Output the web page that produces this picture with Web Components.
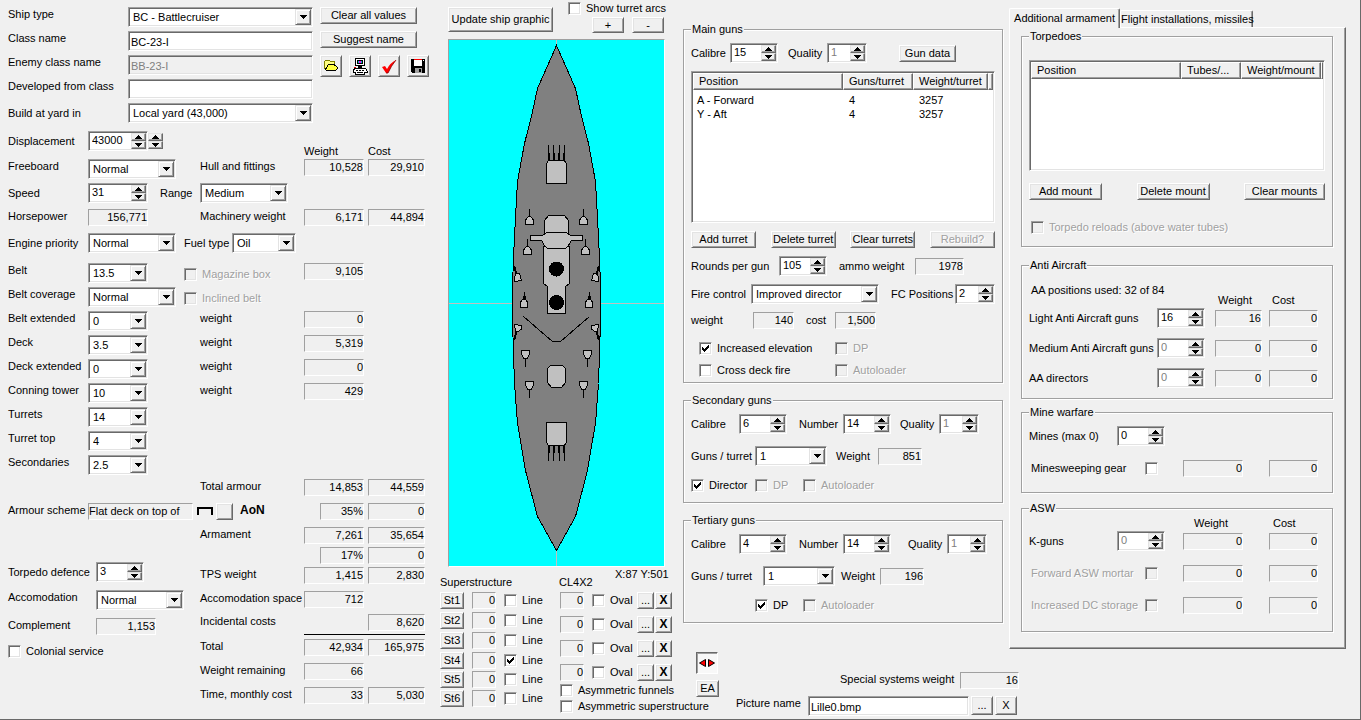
<!DOCTYPE html>
<html lang="en">
<head>
<meta charset="utf-8">
<title>Ship design</title>
<style>
  body { margin: 0; background: #f0f0f0; color: #000; font: 11px/15px "Liberation Sans", Arial, sans-serif; }
</style>
</head>
<body>
<ship-designer></ship-designer>

<script>
const BASE = `
  *, :host { box-sizing: border-box; }
  input, select, button, table { font: inherit; color: inherit; margin: 0; }
  button { border: 1px solid; border-color: #fff #696969 #696969 #fff; box-shadow: inset 1px 1px #e3e3e3, inset -1px -1px #a0a0a0;
    background: #f0f0f0; padding: 0; white-space: nowrap; }
  button:disabled { color: #a0a0a0; text-shadow: 1px 1px #fff; }
  .sunk { border: 1px solid; border-color: #a0a0a0 #fff #fff #a0a0a0; box-shadow: inset 1px 1px #696969, inset -1px -1px #e3e3e3;
    background: #fff; padding: 1px; height: 20px; width: var(--w); flex: none; }
  label { width: var(--lw); flex: none; white-space: nowrap; }
  svg { display: block; }
`;

function define(name, css, html) {
  customElements.define(name, class extends HTMLElement {
    constructor() {
      super();
      this.attachShadow({ mode: 'open' });
    }
    connectedCallback() {
      const body = typeof html === 'function' ? html(n => this.getAttribute(n) ?? '', n => this.hasAttribute(n)) : html;
      this.shadowRoot.innerHTML = `<style>${BASE}${css}</style>${body}`;
    }
  });
}

/* ---- controls ---- */
const FIELD = `:host { display: flex; align-items: var(--va, flex-start); }`;

define('text-field', FIELD + `
  input { outline: 0; }
  input.sunk { padding: 1px 3px 0 2px; }
  input:disabled { color: #808080; background: var(--bg, #fff); }
`, (a, h) => `<label for="c">${a('label')}</label>
  <input id="c" class="sunk" type="text" value="${a('value')}" ${h('disabled') ? 'disabled' : ''}>`);

define('combo-field', FIELD + `
  .sunk { display: grid; }
  select { grid-area: 1/1; appearance: none; border: 0; background: none; padding: 0 18px 0 3px; height: 17px; width: 100%; outline: 0; border-radius: 0; }
  i { grid-area: 1/1; justify-self: end; width: 16px; height: 16px; display: grid; place-items: center; pointer-events: none;
    background: #f0f0f0; border: 1px solid; border-color: #e3e3e3 #696969 #696969 #e3e3e3; box-shadow: inset 1px 1px #fff, inset -1px -1px #a0a0a0; }
`, a => `<label for="c">${a('label')}</label>
  <div class="sunk"><select id="c"><option>${a('value')}</option></select>
  <i><svg width="7" height="4" shape-rendering="crispEdges"><path d="M0 0H7V1H6V2H5V3H4V4H3V3H2V2H1V1H0Z"/></svg></i></div>`);

const SPIN_CSS = `
  .spin { display: grid; grid-template-rows: 8px 8px; width: 15px; flex: none; }
  .spin button { display: grid; place-items: center; border-color: #e3e3e3 #696969 #696969 #e3e3e3; box-shadow: inset -1px -1px #a0a0a0; }
`;
const SPIN = `<div class="spin">
  <button tabindex="-1" aria-label="Increase"><svg width="7" height="4" shape-rendering="crispEdges"><path d="M3 0H4V1H5V2H6V3H7V4H0V3H1V2H2V1H3Z"/></svg></button>
  <button tabindex="-1" aria-label="Decrease"><svg width="7" height="4" shape-rendering="crispEdges"><path d="M0 0H7V1H6V2H5V3H4V4H3V3H2V2H1V1H0Z"/></svg></button></div>`;

define('spin-field', FIELD + SPIN_CSS + `
  .sunk { display: flex; }
  input { flex: 1; min-width: 0; border: 0; padding: 0 0 0 2px; background: none; outline: 0; height: 15px; }
  input:disabled { color: #808080; }
`, (a, h) => `<label for="c">${a('label')}</label>
  <div class="sunk"><input id="c" type="text" inputmode="numeric" value="${a('value')}" ${h('disabled') ? 'disabled' : ''}>${SPIN}</div>`);

define('spin-buttons', `:host { display: block; padding-top: 2px; }` + SPIN_CSS, SPIN);

define('check-field', `
  :host { display: flex; align-items: center; }
  .box { display: grid; flex: none; }
  input { grid-area: 1/1; appearance: none; width: 13px; height: 13px; background: #fff; border: 1px solid; border-color: #a0a0a0 #fff #fff #a0a0a0;
    box-shadow: inset 1px 1px #696969, inset -1px -1px #e3e3e3; }
  svg { grid-area: 1/1; place-self: center; visibility: hidden; pointer-events: none; }
  input:checked + svg { visibility: visible; }
  label { padding-left: 5px; height: 15px; }
  :host([lead]) label { order: -1; padding-left: 2px; }
  :host([disabled]) input { background: #f0f0f0; }
  :host([disabled]) label { color: #a0a0a0; text-shadow: 1px 1px #fff; }
`, (a, h) => `<span class="box"><input id="c" type="checkbox" ${h('checked') ? 'checked' : ''} ${h('disabled') ? 'disabled' : ''}>
  <svg width="7" height="7" shape-rendering="crispEdges"><path d="M0 2H1V3H2V4H3V3H4V2H5V1H6V0H7V3H6V4H5V5H4V6H3V7H2V6H1V5H0Z"/></svg></span>
  <label for="c">${a('label')}</label>`);

define('read-out', FIELD + `
  output { display: block; width: var(--w, 60px); height: 17px; border: 1px solid; border-color: #a0a0a0 #fff #fff #a0a0a0; text-align: var(--ta, right); white-space: nowrap; flex: none; }
`, (a, h) => `${h('label') ? `<label for="c">${a('label')}</label>` : ''}<output id="c">${a('value')}</output>`);

define('push-button', `
  :host { display: block; }
  button { width: var(--w); height: var(--h, 17px); display: grid; place-items: center; }
  :host([small]) button { width: 22px; height: 22px; }
`, (a, h) => `<button ${h('disabled') ? 'disabled' : ''} ${h('name') ? `aria-label="${a('name')}"` : ''}><slot></slot></button>`);

define('group-box', `
  :host { display: block; }
  fieldset { margin: 0; min-width: 0; border: 1px solid #a0a0a0; box-shadow: inset 1px 1px #fff, 1px 1px #fff; padding: 0 7px var(--pb, 12px); }
  legend { padding: 0 1px; background: #f0f0f0; height: 15px; }
`, a => `<fieldset><legend>${a('legend')}</legend><slot></slot></fieldset>`);

define('list-view', `
  :host { display: block; }
  .sunk { width: auto; height: var(--h); overflow: hidden; }
  table { border-collapse: separate; border-spacing: 0; table-layout: fixed; width: 100%; }
  th { height: 17px; font-weight: normal; text-align: left; padding: 0 0 0 5px; background: #f0f0f0; border: 1px solid; white-space: nowrap; overflow: hidden;
    border-color: #fff #696969 #696969 #fff; box-shadow: inset -1px -1px #a0a0a0; line-height: 15px; }
  td { padding: 0 0 0 6px; line-height: 14px; height: 14px; }
  td:first-child { padding-left: 4px; }
  tr:first-child td { padding-top: 3px; }
`, a => `<div class="sunk"><table><colgroup>${a('widths').split(' ').map(w => `<col style="width:${w}px">`).join('')}<col></colgroup>
  <thead><tr>${a('heads').split('|').map(t => `<th>${t}</th>`).join('')}<th></th></tr></thead>
  <tbody>${a('rows') ? a('rows').split(';').map(r => `<tr>${r.split('|').map(t => `<td>${t}</td>`).join('')}<td></td></tr>`).join('') : ''}</tbody></table></div>`);

/* ---- identity fields and the commands beside them ---- */
define('identity-panel', `
  :host { display: flex; gap: 7px; padding: 7px 0 0 8px; }
  .fields { display: grid; gap: 4px; --lw: 120px; --w: 185px; }
  .commands { display: grid; align-content: start; gap: 7px; --w: 97px; }
  .tools { display: flex; gap: 7px; }
`, `
  <div class="fields">
    <combo-field label="Ship type" value="BC - Battlecruiser"></combo-field>
    <text-field label="Class name" value="BC-23-I"></text-field>
    <text-field label="Enemy class name" value="BB-23-I" disabled style="--bg:#f0f0f0"></text-field>
    <text-field label="Developed from class"></text-field>
    <combo-field label="Build at yard in" value="Local yard (43,000)" style="--va:center"></combo-field>
  </div>
  <div class="commands">
    <push-button>Clear all values</push-button>
    <push-button>Suggest name</push-button>
    <div class="tools">
      <push-button small name="Open"><svg width="16" height="16" shape-rendering="crispEdges">
        <path d="M1.500 3.500L2.500 2.500H6.500L7.500 3.500H11.500V6.500H5.500L2.500 11.500L1.500 10.500Z" fill="#ffff80" stroke="#808000"/>
        <path d="M5.500 6.500H11L14.500 9.500V10.500L12.500 12.500H3.500L2.500 11.500Z" fill="#ffff40" stroke="#000"/></svg></push-button>
      <push-button small name="Print"><svg width="16" height="17" shape-rendering="crispEdges">
        <path d="M3.500 .5H12.500V7.500H3.500Z" fill="#fff" stroke="#000"/><path d="M5.500 2.500H10.500V5.500H5.500Z" fill="#00c0c0" stroke="#000"/><path d="M7 3H9V5H7Z" fill="#f0f"/>
        <path d="M6 8H10V10H6Z"/><path d="M2.500 10.500H13.500L15.500 13.500V14.500H12.500V16H3.500V14.500H1.500V12.500Z" fill="#fff" stroke="#000"/><path d="M4 12.500H6M7 12.500H9M10 12.500H12M5 14.500H11" stroke="#000"/><path d="M2 9H4V10H2Z" fill="#e00000"/></svg></push-button>
      <push-button small name="Check design"><svg width="16" height="16">
        <path d="M1 9L4 8L6 11Q9 5 15 2Q10 8 7 15H5Z" fill="#f00"/><path d="M15 2Q10 8 7 15H5" fill="none" stroke="#800000" stroke-width=".8"/></svg></push-button>
      <push-button small name="Save"><svg width="16" height="16" shape-rendering="crispEdges">
        <path d="M1 1H15V15H2L1 14Z"/><path d="M4 2H12V8H4Z" fill="#fff"/><path d="M4 1H12V2H4Z" fill="#f00"/><path d="M5 10H12V15H5Z" fill="#a0a0a0"/><path d="M9 11H11V14H9Z" fill="#000"/><path d="M13 2H14V3H13Z" fill="#fff"/></svg></push-button>
    </div>
  </div>`);

/* ---- hull, machinery and armour with the weight/cost ledger ---- */
define('hull-panel', `
  :host { display: block; padding: 8px 0 0 8px; }
  .grid { display: grid; grid-template-columns: 188px 100px 60px 57px; column-gap: 4px; align-items: start; --lw: 80px; --w: 60px; }
  .top { grid-template-rows: 28px 24px 26px 24px 30px repeat(11, 24px); }
  .sums { grid-template-columns: 100px 60px 57px; grid-template-rows: 20px 20px 24px 23px 20px 5px repeat(3, 24px); }
  .row { display: flex; grid-column: 1; }
  .wide { grid-column: 1 / 3; }
  .b { grid-column: 2; white-space: nowrap; } .c { grid-column: 3; } .d { grid-column: 4; --w: 57px; }
  .head { align-self: end; }
  .total { grid-row: 15; }
  .combo { --w: 88px; }
  .pct { --w: 44px; justify-self: end; }
  check-field.in { padding-top: 3px; margin-left: 36px; }
  .bottom { display: flex; gap: 4px; }
  .left { display: grid; align-content: start; gap: 8px; width: 188px; padding-top: 35px; --lw: 88px; --w: 48px; }
  .left read-out { --w: 60px; }
  .sums .b { grid-column: 1; } .sums .c { grid-column: 2; } .sums .d { grid-column: 3; }
  hr { grid-column: 2 / 4; width: 100%; margin: 0; border: 0; height: 1px; background: #000; }
  .scheme { --w: 105px; --ta: left; }
  .aon { margin-left: 7px; font-size: 12px; font-weight: bold; }
  .shape { margin: 4px 3px 0 4px; }
`, `
  <div class="grid top">
    <div class="row"><spin-field label="Displacement" value="43000" style="--va:center"></spin-field><spin-buttons></spin-buttons></div>
    <span class="c head">Weight</span><span class="d head">Cost</span>

    <combo-field class="row combo" label="Freeboard" value="Normal"></combo-field>
    <span class="b">Hull and fittings</span><read-out class="c" value="10,528"></read-out><read-out class="d" value="29,910"></read-out>

    <div class="row wide" style="gap:12px;--va:center"><spin-field label="Speed" value="31"></spin-field><combo-field class="combo" style="--lw:40px" label="Range" value="Medium"></combo-field></div>

    <read-out class="row" label="Horsepower" value="156,771"></read-out>
    <span class="b">Machinery weight</span><read-out class="c" value="6,171"></read-out><read-out class="d" value="44,894"></read-out>

    <div class="row wide" style="gap:8px;--va:center"><combo-field class="combo" label="Engine priority" value="Normal"></combo-field><combo-field style="--lw:48px;--w:64px" label="Fuel type" value="Oil"></combo-field></div>

    <div class="row wide"><combo-field label="Belt" value="13.5"></combo-field><check-field class="in" disabled label="Magazine box"></check-field></div>
    <read-out class="c" value="9,105"></read-out>

    <div class="row wide"><combo-field class="combo" label="Belt coverage" value="Normal"></combo-field><check-field class="in" style="margin-left:8px" disabled label="Inclined belt"></check-field></div>

    <combo-field class="row" label="Belt extended" value="0"></combo-field><span class="b">weight</span><read-out class="c" value="0"></read-out>
    <combo-field class="row" label="Deck" value="3.5"></combo-field><span class="b">weight</span><read-out class="c" value="5,319"></read-out>
    <combo-field class="row" label="Deck extended" value="0"></combo-field><span class="b">weight</span><read-out class="c" value="0"></read-out>
    <combo-field class="row" label="Conning tower" value="10"></combo-field><span class="b">weight</span><read-out class="c" value="429"></read-out>
    <combo-field class="row" label="Turrets" value="14"></combo-field>
    <combo-field class="row" label="Turret top" value="4"></combo-field>
    <combo-field class="row" label="Secondaries" value="2.5"></combo-field>

    <span class="b total">Total armour</span><read-out class="c total" value="14,853"></read-out><read-out class="d total" value="44,559"></read-out>

    <div class="row wide">
      <read-out class="scheme" label="Armour scheme" value="Flat deck on top of"></read-out>
      <svg class="shape" width="16" height="8" shape-rendering="crispEdges"><path d="M0 0H16V8H14V2H2V8H0Z"/></svg>
      <push-button style="--w:17px" name="Change armour scheme"></push-button><span class="aon">AoN</span>
    </div>
    <read-out class="c pct" value="35%"></read-out><read-out class="d" value="0"></read-out>
  </div>
  <div class="bottom">
    <div class="left">
      <spin-field label="Torpedo defence" value="3" style="--va:center"></spin-field>
      <combo-field class="combo" label="Accomodation" value="Normal"></combo-field>
      <read-out label="Complement" value="1,153"></read-out>
      <check-field style="padding-top:1px;--lw:auto" label="Colonial service"></check-field>
    </div>
    <div class="grid sums">
      <span class="b">Armament</span><read-out class="c" value="7,261"></read-out><read-out class="d" value="35,654"></read-out>
      <read-out class="c pct" value="17%"></read-out><read-out class="d" value="0"></read-out>
      <span class="b">TPS weight</span><read-out class="c" value="1,415"></read-out><read-out class="d" value="2,830"></read-out>
      <span class="b">Accomodation space</span><read-out class="c" value="712"></read-out>
      <span class="b">Incidental costs</span><read-out class="d" value="8,620"></read-out>
      <hr>
      <span class="b">Total</span><read-out class="c" value="42,934"></read-out><read-out class="d" value="165,975"></read-out>
      <span class="b">Weight remaining</span><read-out class="c" value="66"></read-out>
      <span class="b">Time, monthly cost</span><read-out class="c" value="33"></read-out><read-out class="d" value="5,030"></read-out>
    </div>
  </div>`);

/* ---- plan view of the ship ---- */
define('ship-plan', `
  :host { display: block; width: 217px; height: 528px; border: 1px solid; border-color: #a0a0a0 #fff #fff #a0a0a0; background: #0ff; }
`, () => {
  const both = d => d + `<g transform="matrix(-1 0 0 1 217 0)">${d}</g>`;
  const gun = (x, y) => `<g transform="translate(${x} ${y})"><path d="M0 -8V0" stroke-width="1"/><path d="M-1 0H1L4 3.500V8H-4V3.500Z"/></g>`;
  const aft = (x, y) => `<g transform="translate(${x} ${y})"><path d="M0 8V16"/><path d="M-4 0H4V4L1.500 8H-1.500L-4 4Z"/></g>`;
  const main = `<path d="M2.500 0V15M7.500 0V15M13.500 0V15M18.500 0V15" fill="none"/><path d="M3 8H4V15H3ZM8 8H9V15H8ZM12 8H13V15H12ZM17 8H18V15H17Z" fill="#000" stroke="none"/><path d="M2.500 15.500H18.500L20.500 19V38.500H.5V19Z"/>`;
  return `<svg width="215" height="526" viewBox="1 1 215 526" role="img" aria-label="Ship plan" shape-rendering="crispEdges" fill="#c0c0c0" stroke="#000">
    <path d="M108.500 0V528M0 264.500H217" stroke="#c0c0c0"/>
    <path fill="#808080" d="M108.500 6.500L127.500 49.500L133 75L140.500 104.500L147.500 142.500L149.500 178.500L151.500 218.500L152.500 247.500V281.500L151.500 314.500L150.500 344.500L147.500 384.500L144.500 401.500L139.500 431.500L127.500 477.500L108.500 511.500
      L89.500 477.500L77.500 431.500L72.500 401.500L69.500 384.500L66.500 344.500L65.500 314.500L64.500 281.500V247.500L65.500 218.500L67.500 178.500L69.500 142.500L76.500 104.500L84 75L89.500 49.500Z"/>
    <g transform="translate(98 106)">${main}</g>
    <g transform="matrix(1 0 0 -1 98 422)">${main}</g>
    <path d="M100.500 176.500H116.500L120.500 181.500V200H96.500V181.500Z"/>
    <path d="M95.500 207.500H121.500V244.500L117.500 247.500V274.500H99.500V247.500L95.500 244.500Z"/>
    <path d="M82.500 196.500H94.500L98.500 193.500H118.500L122.500 196.500H134.500V201.500H123.500L120.500 206.500L117.500 209.500H99.500L96.500 206.500L93.500 201.500H82.500Z"/>
    <circle cx="108.500" cy="230" r="7" fill="#000"/><circle cx="108.500" cy="263.500" r="7" fill="#000"/>
    <path d="M75.500 277.500L104.500 302.500H112.500L141.500 277.500" fill="none"/>
    <path d="M102.500 326.500H114.500L117.500 329.500V343.500L113.500 348.500H103.500L99.500 343.500V329.500Z"/>
    ${both(gun(81.5, 177.5) + gun(79.5, 207.5) + aft(77.5, 311.5) + aft(81.5, 342.5) + `
      <path d="M66 227L68.500 235" stroke-width="2"/><path d="M68.500 234.500H71.500L73.500 241.500L66.500 242.500V238Z"/>
      <path d="M76 253V260" stroke-width="1"/><path d="M75 257H77V260H75Z" fill="#000"/><path d="M74.500 260.500H77.500L79.500 263V268.500H72.500V263Z"/>
      <path d="M66 301L68.500 293" stroke-width="2"/><path d="M66.500 285.500L73.500 286.500V290L70.500 292.500H67.500Z"/>`)}
  </svg>`;
});

define('graphic-panel', `
  :host { display: block; width: 243px; flex: none; }
  .top { display: flex; gap: 15px; padding: 1px 0 0 8px; height: 39px; }
  .top .update { padding-top: 6px; --w: 105px; --h: 25px; }
  .zoom { display: flex; gap: 8px; padding: 1px 0 0 24px; --w: 32px; --h: 16px; }
  ship-plan { margin-left: 8px; }
  .caption { display: flex; height: 25px; align-items: flex-end; padding-bottom: 2px; }
  .caption :nth-child(1) { width: 119px; } .caption :nth-child(2) { width: 56px; }
  .caption :nth-child(3) { align-self: flex-start; white-space: nowrap; }
  .lower { display: flex; --w: 24px; }
  .decks { display: grid; grid-template-columns: 24px 24px auto; column-gap: 8px; grid-template-rows: 20px 20px 20px 19px 19px 17px; align-items: start; width: 120px; }
  .decks check-field, .funnel check-field { padding-top: 1px; }
  .right { display: grid; align-content: start; gap: 7px; }
  .funnel { display: flex; align-items: flex-start; --lw: 32px; }
  .funnel check-field { padding-left: 8px; }
  .funnel push-button { --w: 17px; --lw: auto; margin-right: 1px; }
  .funnel b { font-size: 12px; }
  .asym { display: grid; gap: 1px; margin-top: -5px; width: 123px; --w: auto; }
`, `
  <div class="top">
    <push-button class="update">Update ship graphic</push-button>
    <div><check-field label="Show turret arcs"></check-field>
      <div class="zoom"><push-button>+</push-button><push-button>-</push-button></div></div>
  </div>
  <ship-plan></ship-plan>
  <div class="caption"><span>Superstructure</span><span>CL4X2</span><span>X:87 Y:501</span></div>
  <div class="lower">
    <div class="decks">${[1, 2, 3, 4, 5, 6].map(n => `<push-button>St${n}</push-button><read-out value="0"></read-out><check-field label="Line" ${n === 4 ? 'checked' : ''}></check-field>`).join('')}</div>
    <div class="right">
      ${`<div class="funnel"><read-out value="0"></read-out><check-field label="Oval"></check-field><push-button>...</push-button><push-button><b>X</b></push-button></div>`.repeat(4)}
      <div class="asym"><check-field label="Asymmetric funnels"></check-field><check-field label="Asymmetric superstructure"></check-field></div>
    </div>
  </div>`);

/* ---- gun batteries ---- */
define('guns-panel', `
  :host { display: block; width: 320px; flex: none; padding-top: 22px; }
  .stack { display: grid; gap: 8px; padding-top: 6px; }
  .tall { gap: 12px; }
  .row { display: flex; align-items: center; --va: center; }
  .four { display: flex; justify-content: space-between; --w: 65px; }
  .checks { display: grid; grid-template-columns: 136px auto; row-gap: 7px; padding: 4px 0 0 8px; }
  group-box + group-box { padding-top: 10px; }
  .s { --w: 48px; } .q { --w: 40px; }
`, `
  <group-box legend="Main guns" style="--pb:4px"><div class="stack">
    <div class="row" style="gap:10px"><spin-field class="s" style="--lw:39px" label="Calibre" value="15"></spin-field>
      <spin-field class="q" style="--lw:39px" label="Quality" value="1" disabled></spin-field>
      <push-button style="--w:57px;margin-left:22px">Gun data</push-button></div>
    <list-view style="--h:152px" heads="Position|Guns/turret|Weight/turret" widths="150 70 75" rows="A - Forward|4|3257;Y - Aft|4|3257"></list-view>
    <div class="four"><push-button>Add turret</push-button><push-button>Delete turret</push-button><push-button>Clear turrets</push-button><push-button disabled>Rebuild?</push-button></div>
    <div class="row" style="gap:12px"><spin-field class="s" style="--lw:88px" label="Rounds per gun" value="105"></spin-field>
      <read-out style="--lw:76px;--w:49px" label="ammo weight" value="1978"></read-out></div>
    <div class="row" style="gap:12px"><combo-field style="--lw:60px;--w:128px" label="Fire control" value="Improved director"></combo-field>
      <spin-field class="q" style="--lw:64px" label="FC Positions" value="2"></spin-field></div>
    <div class="row" style="gap:12px"><read-out style="--lw:62px;--w:41px" label="weight" value="140"></read-out>
      <read-out style="--lw:29px;--w:41px" label="cost" value="1,500"></read-out></div>
    <div class="checks"><check-field checked label="Increased elevation"></check-field><check-field disabled label="DP"></check-field>
      <check-field label="Cross deck fire"></check-field><check-field disabled label="Autoloader"></check-field></div>
  </div></group-box>

  <group-box legend="Secondary guns" style="--pb:9px"><div class="stack tall">
    <div class="row"><spin-field class="s" style="--lw:48px" label="Calibre" value="6"></spin-field>
      <spin-field class="s" style="--lw:44px;margin-left:12px" label="Number" value="14"></spin-field>
      <spin-field class="q" style="--lw:39px;margin-left:9px" label="Quality" value="1" disabled></spin-field></div>
    <div class="row" style="gap:9px"><combo-field style="--lw:64px;--w:72px" label="Guns / turret" value="1"></combo-field>
      <read-out style="--lw:42px;--w:44px" label="Weight" value="851"></read-out></div>
    <div class="row"><check-field style="--lw:51px" checked label="Director"></check-field><check-field style="--lw:35px" disabled label="DP"></check-field><check-field disabled label="Autoloader"></check-field></div>
  </div></group-box>

  <group-box legend="Tertiary guns" style="--pb:9px"><div class="stack tall">
    <div class="row"><spin-field class="s" style="--lw:48px" label="Calibre" value="4"></spin-field>
      <spin-field class="s" style="--lw:44px;margin-left:12px" label="Number" value="14"></spin-field>
      <spin-field class="q" style="--lw:39px;margin-left:17px" label="Quality" value="1" disabled></spin-field></div>
    <div class="row" style="gap:6px"><combo-field style="--lw:72px;--w:72px" label="Guns / turret" value="1"></combo-field>
      <read-out style="--lw:39px;--w:44px" label="Weight" value="196"></read-out></div>
    <div class="row" style="padding-left:64px"><check-field style="--lw:35px" checked label="DP"></check-field><check-field disabled label="Autoloader"></check-field></div>
  </div></group-box>`);

/* ---- tabbed page: torpedoes, AA, mines, ASW ---- */
define('extras-panel', `
  :host { display: block; flex: 1; min-width: 352px; padding: 8px 14px 0 6px; }
  .tabs { display: flex; align-items: flex-end; }
  .tabs button { border-width: 1px 1px 0 1px; border-radius: 2px 2px 0 0; box-shadow: inset -1px 0 #a0a0a0; height: 17px; width: 133px; }
  .tabs button[aria-selected=true] { height: 20px; width: 111px; margin-bottom: -1px; }
  .page { border: 1px solid; border-color: #fff #696969 #696969 #fff; box-shadow: inset -1px -1px #a0a0a0; padding: 1px 12px 16px 11px; }
  .buttons { display: flex; justify-content: space-between; padding: 12px 0 20px; --w: 73px; }
  .aa { display: grid; grid-template-columns: 186px 54px 1fr; grid-template-rows: 25px 20px 20px 20px; row-gap: 10px; align-items: center; --lw: 128px; --va: center; }
  .aa .h { align-self: end; padding-left: 3px; margin-bottom: -10px; }
  .aa spin-field { --w: 48px; } .aa read-out { --w: 47px; } .aa .k { --w: 49px; }
  .four { display: grid; grid-template-columns: 154px 86px 1fr; grid-auto-rows: 20px; row-gap: 12px; align-items: center; --lw: 88px; --va: center; }
  .four spin-field { --w: 48px; } .four .k { --w: 49px; } .four read-out { --w: 60px; }
  .four check-field { --lw: 116px; }
  .heads { display: grid; grid-template-columns: 154px 86px 1fr; }
`, `
  <div class="tabs" role="tablist"><button role="tab" aria-selected="true">Additional armament</button><button role="tab" aria-selected="false">Flight installations, missiles</button></div>
  <div class="page">
    <group-box legend="Torpedoes" style="--pb:11px">
      <list-view style="--h:111px;padding-top:16px" heads="Position|Tubes/...|Weight/mount" widths="150 60 80"></list-view>
      <div class="buttons"><push-button>Add mount</push-button><push-button>Delete mount</push-button><push-button style="--w:81px">Clear mounts</push-button></div>
      <check-field style="padding-left:2px" disabled label="Torpedo reloads (above water tubes)"></check-field>
    </group-box>
    <group-box legend="Anti Aircraft" style="--pb:10px;padding-top:11px"><div class="aa">
      <span style="padding:10px 0 0 2px">AA positions used: 32 of 84</span><span class="h">Weight</span><span class="h">Cost</span>
      <spin-field label="Light Anti Aircraft guns" value="16"></spin-field><read-out value="16"></read-out><read-out class="k" value="0"></read-out>
      <spin-field label="Medium Anti Aircraft guns" value="0" disabled></spin-field><read-out value="0"></read-out><read-out class="k" value="0"></read-out>
      <spin-field label="AA directors" value="0" disabled></spin-field><read-out value="0"></read-out><read-out class="k" value="0"></read-out>
    </div></group-box>
    <group-box legend="Mine warfare" style="--pb:14px;padding-top:6px"><div class="four" style="padding-top:6px">
      <spin-field style="grid-column:1/4" label="Mines (max 0)" value="0"></spin-field>
      <check-field lead label="Minesweeping gear"></check-field><read-out value="0"></read-out><read-out class="k" value="0"></read-out>
    </div></group-box>
    <group-box legend="ASW" style="--pb:16px;padding-top:8px">
      <div class="heads"><span style="grid-column:2;padding-left:11px">Weight</span><span style="padding-left:4px">Cost</span></div>
      <div class="four">
      <spin-field label="K-guns" value="0" disabled></spin-field><read-out value="0"></read-out><read-out class="k" value="0"></read-out>
      <check-field lead disabled label="Forward ASW mortar"></check-field><read-out value="0"></read-out><read-out class="k" value="0"></read-out>
      <check-field lead disabled label="Increased DC storage"></check-field><read-out value="0"></read-out><read-out class="k" value="0"></read-out>
    </div></group-box>
  </div>`);

define('footer-bar', `
  :host { display: flex; gap: 17px; padding: 3px 0 0 13px; }
  .tools { display: grid; gap: 6px; align-content: start; --w: 23px; }
  .toggle { width: 22px; height: 22px; background: #f8f8f8; border-color: #696969 #fff #fff #696969; box-shadow: inset 1px 1px #a0a0a0; display: grid; place-items: center; }
  .fields { display: grid; gap: 7px; padding-top: 20px; align-content: start; }
  .row { display: flex; gap: 2px; }
`, `
  <div class="tools"><button class="toggle" aria-label="Mirror" aria-pressed="true"><svg width="16" height="8"><path d="M.5 4L6.500 .5V7.500ZM15.500 4L9.500 .5V7.500Z" fill="#f00" stroke="#000"/></svg></button><push-button>EA</push-button></div>
  <div class="fields">
    <read-out style="--lw:120px;--w:59px;padding-left:104px" label="Special systems weight" value="16"></read-out>
    <div class="row"><text-field style="--lw:72px;--w:161px" label="Picture name" value="Lille0.bmp"></text-field>
      <push-button style="--w:22px;--h:19px">...</push-button><push-button style="--w:22px;--h:19px">X</push-button></div>
  </div>`);

define('ship-designer', `
  :host { display: flex; min-height: 100vh; border: solid #696969; border-width: 0 1px 1px 0; }
  .left { width: 440px; flex: none; }
  .right { flex: 1; min-width: 0; }
  .cols { display: flex; }
`, `
  <div class="left"><identity-panel></identity-panel><hull-panel></hull-panel></div>
  <graphic-panel></graphic-panel>
  <div class="right"><div class="cols"><guns-panel></guns-panel><extras-panel></extras-panel></div><footer-bar></footer-bar></div>`);
</script>
</body>
</html>
